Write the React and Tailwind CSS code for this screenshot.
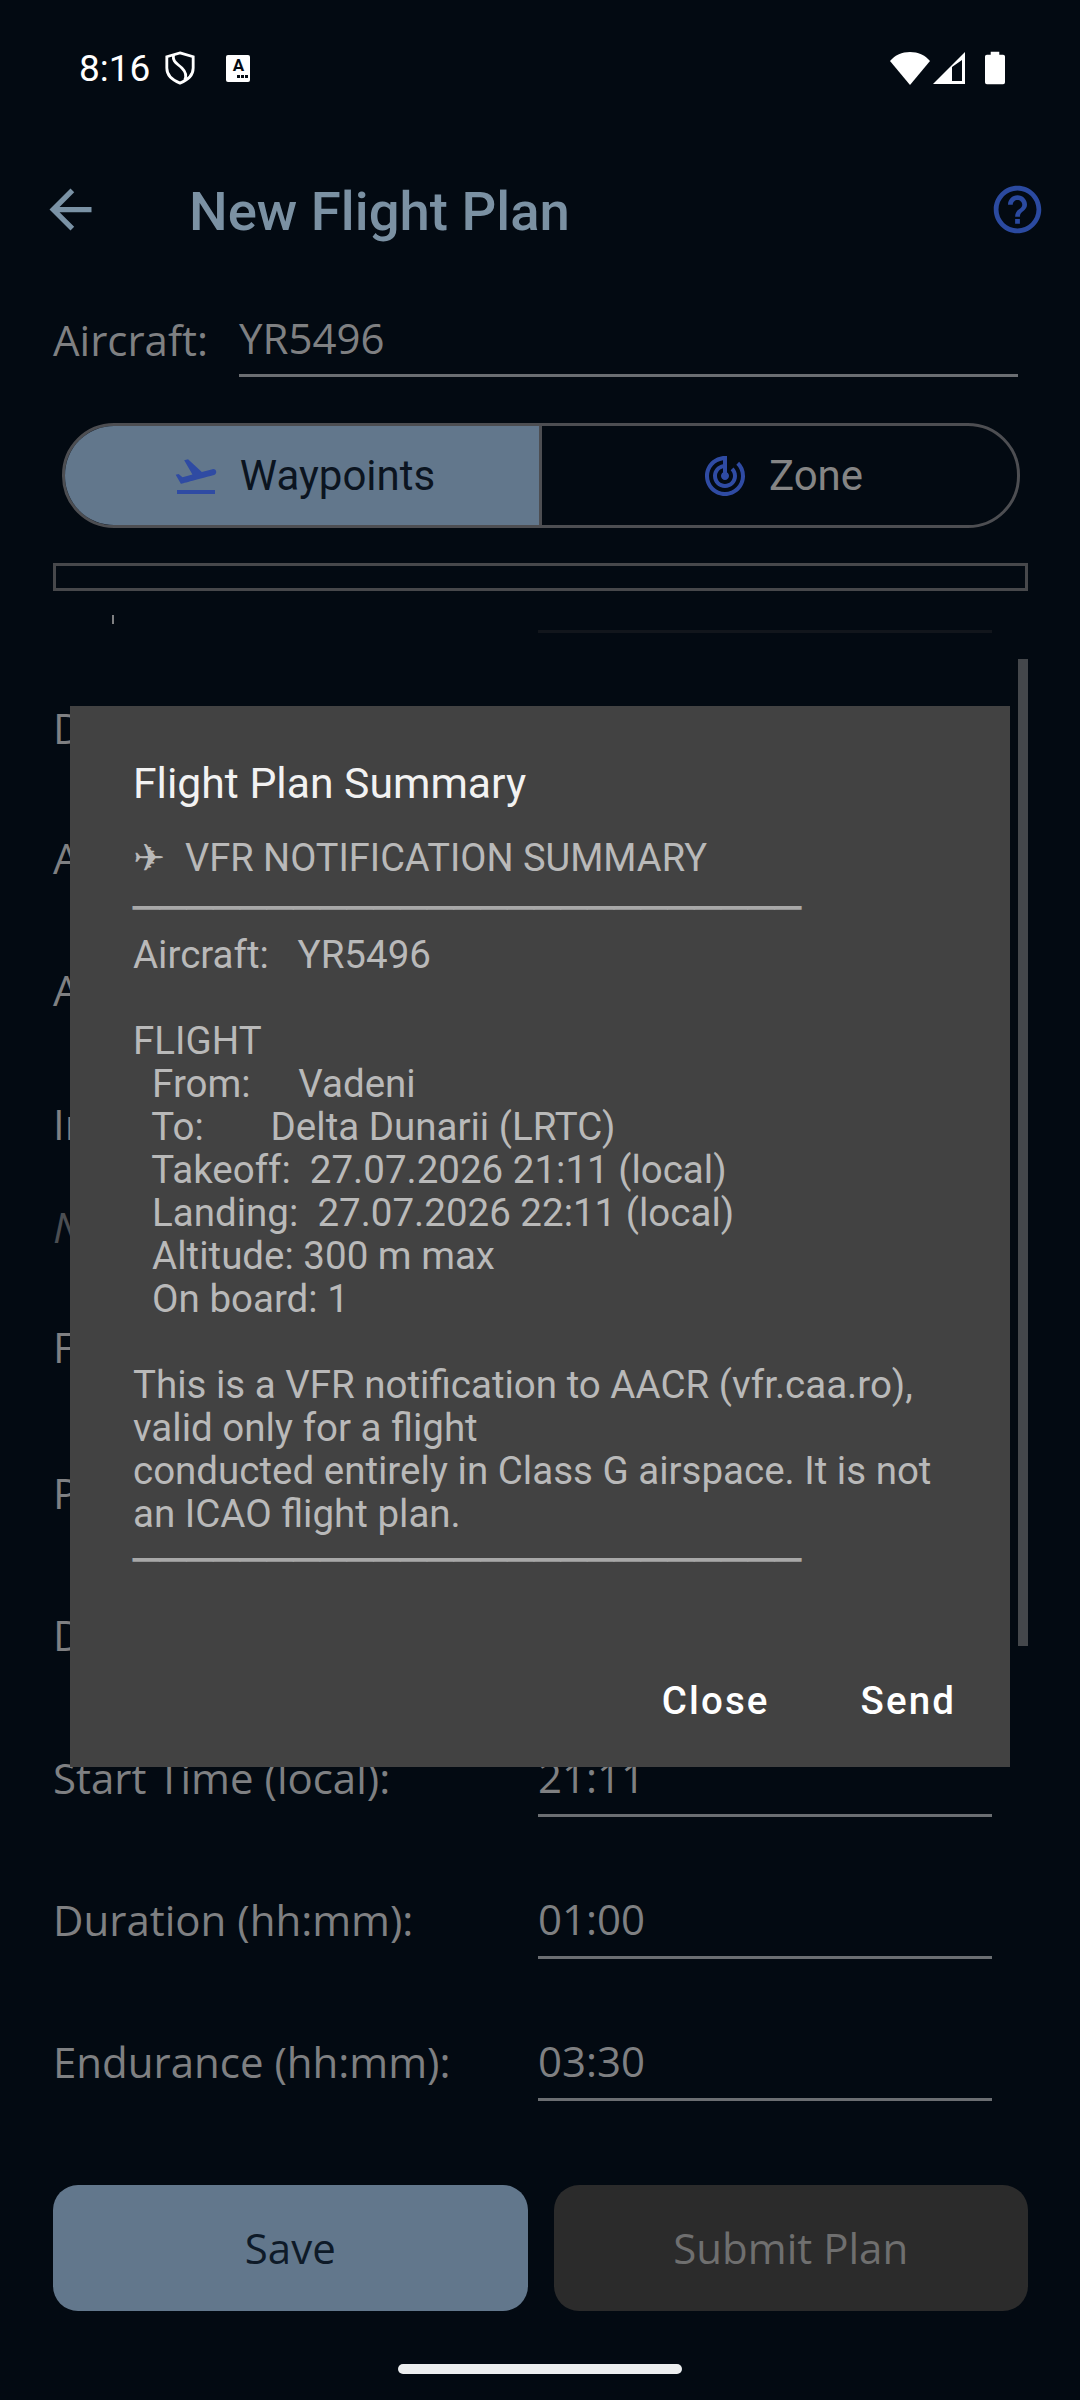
import React from 'react';

const labelFont = "font-['Open_Sans',sans-serif]";
const roboto = "font-['Roboto',sans-serif]";

// rows of the form behind the dialog, most are only peeking out on the left
const rows = [
  { label: 'Departure:', h: 'h-[130px]' },
  { label: 'Arrival:', h: 'h-[132px]' },
  { label: 'Alternate:', h: 'h-[134px]' },
  { label: 'Intent:', h: 'h-[103px]' },
  { label: 'Notes', h: 'h-[120px]', hint: true },
  { label: 'Flight type:', h: 'h-[146px]' },
  { label: 'Pilot:', h: 'h-[142px]' },
  { label: 'Date:', h: 'h-[143px]' },
  { label: 'Start Time (local):', value: '21:11', h: 'h-[142px]' },
  { label: 'Duration (hh:mm):', value: '01:00', h: 'h-[142px]' },
  { label: 'Endurance (hh:mm):', value: '03:30', h: 'h-[142px]' },
];

const summary = [
  'Aircraft:   YR5496',
  '',
  'FLIGHT',
  '  From:     Vadeni',
  '  To:       Delta Dunarii (LRTC)',
  '  Takeoff:  27.07.2026 21:11 (local)',
  '  Landing:  27.07.2026 22:11 (local)',
  '  Altitude: 300 m max',
  '  On board: 1',
  '',
  'This is a VFR notification to AACR (vfr.caa.ro),',
  'valid only for a flight',
  'conducted entirely in Class G airspace. It is not',
  'an ICAO flight plan.',
];

const rule = '─'.repeat(25);

const StatusBar = () => (
  <div className="h-[136px] pl-[79px] pr-[75px] flex items-center justify-between text-white">
    <div className="flex items-center">
      <span className={`${roboto} text-[37px] leading-none`}>8:16</span>
      <svg width="32" height="36" viewBox="0 0 34 36" fill="none" stroke="white" strokeWidth="3" className="ml-[14px]">
        <path d="M17 2 L31 6 V18 C31 26 25 31 17 34 C9 31 3 26 3 18 V6 Z" />
        <path d="M10 4 C9 12 14 13 19 18 C23 22 24 27 22 31" />
      </svg>
      <div className="ml-[30px] w-[24px] h-[27px] bg-white rounded-[2px] flex flex-col items-center text-[#030a12]">
        <span className={`${roboto} font-bold text-[17px] leading-[20px]`}>A</span>
        <div className="flex gap-[1px] self-end pr-[2px]">
          <div className="w-[3px] h-[3px] bg-[#030a12]" />
          <div className="w-[3px] h-[3px] bg-[#030a12]" />
          <div className="w-[3px] h-[3px] bg-[#030a12]" />
        </div>
      </div>
    </div>
    <div className="flex items-center">
      <svg width="40" height="33" viewBox="0 0 40 33" fill="white">
        <path d="M20 33 L0 9 C5 3 12 0 20 0 C28 0 35 3 40 9 Z" />
      </svg>
      <svg width="33" height="33" viewBox="0 0 33 33" className="ml-[3px]" fill="white" fillRule="evenodd">
        <path d="M32 0 V32 H0 Z M19 15 V29 H29 V8 Z" />
      </svg>
      <svg width="20" height="34" viewBox="0 0 21 34" className="ml-[19px]" fill="white">
        <path d="M6 0 H15 V3 H19 Q21 3 21 5 V32 Q21 34 19 34 H2 Q0 34 0 32 V5 Q0 3 2 3 H6 Z" />
      </svg>
    </div>
  </div>
);

const Header = () => (
  <div className="h-[146px] flex items-center pl-[39px] pr-[34px]">
    <svg width="63" height="63" viewBox="0 0 24 24" fill="#7a92a5">
      <path d="M20 11H7.83l5.59-5.59L12 4l-8 8 8 8 1.41-1.41L7.83 13H20v-2z" />
    </svg>
    <span className={`${roboto} font-medium text-[54.5px] leading-[66px] pt-[3px] ml-[87px] text-[#7b91a3] flex-1`}>New Flight Plan</span>
    <svg width="57" height="57" viewBox="0 0 24 24" fill="#2b4aa0">
      <path d="M11 18h2v-2h-2v2zm1-16C6.48 2 2 6.48 2 12s4.48 10 10 10 10-4.48 10-10S17.52 2 12 2zm0 18c-4.41 0-8-3.59-8-8s3.59-8 8-8 8 3.59 8 8-3.59 8-8 8zm0-14c-2.21 0-4 1.79-4 4h2c0-1.1.9-2 2-2s2 .9 2 2c0 2-3 1.75-3 5h2c0-2.25 3-2.5 3-5 0-2.21-1.79-4-4-4z" />
    </svg>
  </div>
);

const Toggle = () => (
  <div className="ml-[62px] mt-[46px] w-[958px] h-[105px] border-[3px] border-[#4d4e52] rounded-[52px] overflow-hidden flex">
    <div className="w-[477px] h-full bg-[#62778c] flex items-center justify-center gap-[20px] border-r-[3px] border-[#4d4e52] pl-[3px]">
      <svg width="48" height="48" viewBox="0 0 24 24" fill="#2f4ba3">
        <path d="M2.5 19h19v2h-19zm19.57-9.36c-.21-.8-1.04-1.28-1.84-1.06L14.92 10l-6.9-6.43-1.93.51 4.14 7.17-4.97 1.33-1.97-1.54-1.45.39 2.59 4.49s7.12-1.9 16.57-4.43c.81-.23 1.28-1.05 1.07-1.85z" />
      </svg>
      <span className={`${roboto} text-[42px] leading-none text-[#0b1420]`}>Waypoints</span>
    </div>
    <div className="flex-1 flex items-center justify-center gap-[20px] pl-[5px]">
      <svg width="48" height="48" viewBox="0 0 24 24" fill="#2f4ba3">
        <path d="M19.07 4.93l-1.41 1.41C19.1 7.79 20 9.79 20 12c0 4.42-3.58 8-8 8s-8-3.58-8-8c0-4.08 3.05-7.44 7-7.93v2.02C8.16 6.57 6 9.03 6 12c0 3.31 2.69 6 6 6s6-2.69 6-6c0-1.66-.67-3.16-1.76-4.24l-1.41 1.41C15.55 9.9 16 10.9 16 12c0 2.21-1.79 4-4 4s-4-1.79-4-4c0-1.86 1.28-3.41 3-3.86v2.14c-.6.35-1 .98-1 1.72 0 1.1.9 2 2 2s2-.9 2-2c0-.74-.4-1.38-1-1.72V2h-1C6.48 2 2 6.48 2 12s4.48 10 10 10 10-4.48 10-10c0-2.76-1.12-5.26-2.93-7.07z" />
      </svg>
      <span className={`${roboto} text-[42px] leading-none text-[#858585]`}>Zone</span>
    </div>
  </div>
);

const FormRow = ({ row }) => (
  <div className={`${row.h} flex items-start pl-[53px] shrink-0`}>
    <span className={`${labelFont} text-[42px] leading-[60px] w-[485px] whitespace-nowrap ${row.hint ? 'italic text-[#4b4e52]' : 'text-[#7f8082]'}`}>{row.label}</span>
    <div className="w-[454px] h-[69px] border-b-[3px] border-[#6b6e72]">
      <span className={`${labelFont} text-[42px] leading-[58px] text-[#7f8082]`}>{row.value}</span>
    </div>
  </div>
);

const SummaryDialog = () => (
  <div className={`${roboto} absolute left-[70px] top-[706px] w-[940px] h-[1061px] bg-[#424242] flex flex-col pl-[63px] pr-[54px]`}>
    <div className="mt-[52px] text-[42.7px] leading-[50px] text-[#f2f2f2]">Flight Plan Summary</div>
    <div className="mt-[29px] text-[38.5px] leading-[43px] text-[#b9b9b9] whitespace-pre">
      <div className="h-[43px] text-[38px] flex items-center">
        <span className="font-['DejaVu_Sans',sans-serif] text-[38px] w-[52px]">✈</span>
        <span>VFR NOTIFICATION SUMMARY</span>
      </div>
      <div className="font-['DejaVu_Sans',sans-serif] text-[44.4px] text-[#a8a8a8] h-[53px] pt-[6px]">{rule}</div>
      {summary.map((line, i) => (
        <div key={i} className="h-[43px]">{line}</div>
      ))}
      <div className="font-['DejaVu_Sans',sans-serif] text-[44.4px] text-[#a8a8a8] h-[53px] pt-[3px]">{rule}</div>
    </div>
    <div className="mt-auto mb-[44px] flex justify-end gap-[91px] font-medium text-[38.5px] leading-[44px] tracking-[2.1px] text-white">
      <span>Close</span>
      <span>Send</span>
    </div>
  </div>
);

export default function App() {
  return (
    <div className="relative w-[1080px] h-[2400px] bg-[#030a12] overflow-hidden flex flex-col">
      <StatusBar />
      <Header />
      <div className="h-[95px] flex items-start pl-[53px] pr-[62px]">
        <span className={`${labelFont} text-[42px] leading-[60px] pt-[28px] box-content text-[#7f8082] w-[186px]`}>Aircraft:</span>
        <div className={`${labelFont} flex-1 h-[95px] pt-[26px] border-b-[3px] border-[#6b6e72] text-[42px] leading-[60px] text-[#7f8082]`}>YR5496</div>
      </div>
      <Toggle />
      <div className="ml-[53px] mt-[35px] w-[975px] h-[28px] border-[3px] border-[#47484b] shrink-0" />
      <div className="relative flex-1 min-h-0 overflow-hidden flex flex-col">
        {/* clipped row at the top of the scroller */}
        <div className="relative h-[107px] shrink-0">
          <div className="absolute left-[112px] top-[24px] w-[2px] h-[9px] bg-[#7f8082]" />
          <div className="absolute left-[538px] top-[39px] w-[454px] h-[3px] bg-[#12161c]" />
        </div>
        {rows.map((row) => (
          <FormRow key={row.label} row={row} />
        ))}
      </div>
      <div className="absolute left-[1018px] top-[659px] w-[10px] h-[987px] bg-[#44474b]" />
      <div className="absolute left-[53px] right-[52px] top-[2185px] h-[126px] flex gap-[26px]">
        <div className={`${labelFont} flex-1 rounded-[25px] bg-[#62778c] flex items-center justify-center pb-[2px] text-[42px] text-[#0e1a28]`}>Save</div>
        <div className={`${labelFont} flex-1 rounded-[25px] bg-[#2b2b2b] flex items-center justify-center pb-[2px] text-[42px] text-[#6f6f6f]`}>Submit Plan</div>
      </div>
      <div className="absolute left-[398px] top-[2364px] w-[284px] h-[10px] rounded-full bg-[#eceeef]" />
      <SummaryDialog />
    </div>
  );
}
